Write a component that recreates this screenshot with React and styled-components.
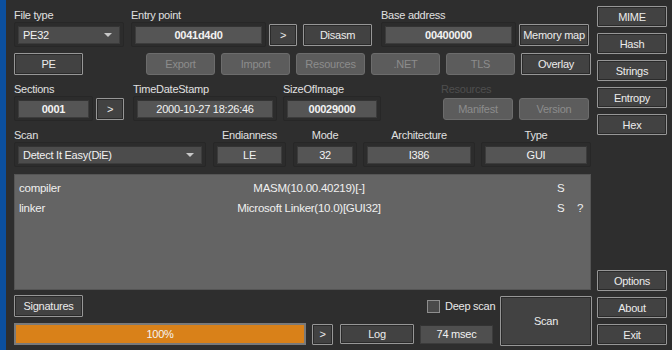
import React from 'react';
import styled, { createGlobalStyle } from 'styled-components';

const Global = createGlobalStyle`
  html, body {
    margin: 0;
    padding: 0;
    background: #2e2e2e;
  }
  body {
    font-family: 'Liberation Sans', Arial, sans-serif;
    font-size: 11px;
    letter-spacing: -0.25px;
    color: #e2e2e2;
  }
`;

const Window = styled.div`
  width: 672px;
  height: 350px;
  display: flex;
  background: #2e2e2e;
  overflow: hidden;
`;

const Stripe = styled.div`
  width: 6px;
  background: #0b4f9e;
`;

const Main = styled.div`
  width: 577px;
  padding: 8px 6px 0 8px;
  display: flex;
  flex-direction: column;
`;

const Side = styled.div`
  width: 70px;
  padding: 6px 0 5px;
  display: flex;
  flex-direction: column;
  gap: 6px;
`;

const Spacer = styled.div`
  flex: 1;
`;

const Row = styled.div`
  display: flex;
  align-items: flex-end;
  gap: ${(p) => p.$gap || 0}px;
  margin-top: ${(p) => p.$top || 0}px;
`;

const Field = styled.div`
  display: flex;
  flex-direction: column;
  margin-left: ${(p) => p.$ml || 0}px;
`;

const Label = styled.div`
  height: 14px;
  line-height: 14px;
  white-space: nowrap;
  color: ${(p) => (p.$dim ? '#4e4e4e' : '#e0e0e0')};
  text-align: ${(p) => (p.$center ? 'center' : 'left')};
`;

const Controls = styled.div`
  display: flex;
  align-items: center;
  height: 25px;
  gap: ${(p) => p.$gap || 3}px;
`;

const Frame = styled.div`
  box-sizing: border-box;
  width: ${(p) => p.$w}px;
  height: 25px;
  padding: 3px;
  border: 1px solid #272727;
  border-radius: 2px;
  background: #2c2c2c;
  display: flex;
  align-items: center;
`;

const Edit = styled.div`
  box-sizing: border-box;
  flex: 1;
  height: 18px;
  line-height: 16px;
  background: #555;
  border: 1px solid #3c3c3c;
  border-top-color: #333;
  color: #f2f2f2;
  font-weight: ${(p) => (p.$bold ? 700 : 400)};
  text-align: center;
  white-space: nowrap;
  overflow: hidden;
`;

const Combo = styled(Edit)`
  display: flex;
  align-items: center;
  justify-content: space-between;
  padding: 0 7px 0 4px;
  text-align: left;
  background: #4c4c4c;
`;

const Arrow = styled.span`
  width: 0;
  height: 0;
  border-left: 4px solid transparent;
  border-right: 4px solid transparent;
  border-top: 4px solid #c8c8c8;
`;

const Button = styled.div`
  box-sizing: border-box;
  width: ${(p) => p.$w || 69}px;
  height: ${(p) => p.$h || 22}px;
  flex-shrink: 0;
  display: flex;
  align-items: center;
  justify-content: center;
  white-space: nowrap;
  border: 1px solid ${(p) => (p.$off ? '#6c6c6c' : '#979797')};
  border-radius: ${(p) => (p.$off ? 3 : 1)}px;
  background: ${(p) => (p.$off ? '#5c5c5c' : '#424242')};
  box-shadow: ${(p) => (p.$off ? 'none' : 'inset 0 0 0 1px #2a2a2a')};
  color: ${(p) => (p.$off ? '#8c8c8c' : '#ececec')};
  margin-left: ${(p) => p.$ml || 0}px;
`;

const Results = styled.div`
  box-sizing: border-box;
  margin-top: 7px;
  height: 116px;
  background: #646464;
  border: 1px solid #555;
  padding: 3px 0 0 4px;
  display: grid;
  grid-template-columns: 140px 300px 98px 20px 1fr;
  grid-auto-rows: 20px;
  align-content: start;
  align-items: center;
  color: #f0f0f0;
  font-size: 11.5px;
`;

const Cell = styled.div`
  text-align: ${(p) => (p.$center ? 'center' : 'left')};
  white-space: nowrap;
`;

const Bottom = styled.div`
  margin-top: 5px;
  display: grid;
  grid-template-columns: 298px 27px 81px 80px 92px;
  grid-template-rows: 22px 6px 22px;
`;

const Progress = styled.div`
  box-sizing: border-box;
  grid-row: 3;
  grid-column: 1;
  width: 292px;
  height: 22px;
  border: 2px solid #7a7a7a;
  background: #d98119;
  color: #f4f4f4;
  display: flex;
  align-items: center;
  justify-content: center;
`;

const Cell3 = styled.div`
  grid-row: 3;
  display: flex;
  align-items: center;
`;

const Check = styled.label`
  grid-row: 1;
  grid-column: 4;
  display: flex;
  align-items: center;
  gap: 5px;
  padding-left: 7px;
  color: #e8e8e8;
  white-space: nowrap;
`;

const Box = styled.span`
  box-sizing: border-box;
  width: 13px;
  height: 13px;
  border: 1px solid #8e8e8e;
  background: #4a4a4a;
`;

const ScanButton = styled(Button)`
  grid-row: 1 / 4;
  grid-column: 5;
  margin-top: 1px;
  height: 50px;
  width: 92px;
`;

const Msec = styled(Edit)`
  flex: none;
  width: 73px;
  height: 19px;
  background: #4f4f4f;
  font-weight: 400;
`;

const sideTop = ['MIME', 'Hash', 'Strings', 'Entropy', 'Hex'];
const sideBottom = ['Options', 'About', 'Exit'];
const pages = ['Export', 'Import', 'Resources', '.NET', 'TLS'];

const results = [
  { type: 'compiler', name: 'MASM(10.00.40219)[-]', s: 'S', q: '' },
  { type: 'linker', name: 'Microsoft Linker(10.0)[GUI32]', s: 'S', q: '?' },
];

export default function App() {
  return (
    <Window>
      <Global />
      <Stripe />
      <Main>
        <Row $gap={7}>
          <Field>
            <Label>File type</Label>
            <Frame $w={110}>
              <Combo>
                PE32 <Arrow />
              </Combo>
            </Frame>
          </Field>
          <Field>
            <Label>Entry point</Label>
            <Controls>
              <Frame $w={135}>
                <Edit $bold>0041d4d0</Edit>
              </Frame>
              <Button $w={28}>&gt;</Button>
              <Button $ml={3}>Disasm</Button>
            </Controls>
          </Field>
          <Field $ml={2}>
            <Label>Base address</Label>
            <Controls>
              <Frame $w={135}>
                <Edit $bold>00400000</Edit>
              </Frame>
              <Button $w={70}>Memory map</Button>
            </Controls>
          </Field>
        </Row>

        <Row $top={6} $gap={6}>
          <Button>PE</Button>
          <Button $off $ml={57}>Export</Button>
          {pages.slice(1).map((p) => (
            <Button $off key={p}>
              {p}
            </Button>
          ))}
          <Button $w={70}>Overlay</Button>
        </Row>

        <Row $top={7}>
          <Field>
            <Label>Sections</Label>
            <Controls>
              <Frame $w={79}>
                <Edit $bold>0001</Edit>
              </Frame>
              <Button $w={28}>&gt;</Button>
            </Controls>
          </Field>
          <Field $ml={9}>
            <Label>TimeDateStamp</Label>
            <Frame $w={144}>
              <Edit>2000-10-27 18:26:46</Edit>
            </Frame>
          </Field>
          <Field $ml={6}>
            <Label>SizeOfImage</Label>
            <Frame $w={98}>
              <Edit $bold>00029000</Edit>
            </Frame>
          </Field>
          <Field $ml={60}>
            <Label $dim>Resources</Label>
            <Controls $gap={6}>
              <Button $off $w={70} $ml={2}>
                Manifest
              </Button>
              <Button $off $w={70}>
                Version
              </Button>
            </Controls>
          </Field>
        </Row>

        <Row $top={7}>
          <Field>
            <Label>Scan</Label>
            <Frame $w={192}>
              <Combo>
                Detect It Easy(DiE) <Arrow />
              </Combo>
            </Frame>
          </Field>
          <Field $ml={7}>
            <Label $center>Endianness</Label>
            <Frame $w={73}>
              <Edit>LE</Edit>
            </Frame>
          </Field>
          <Field $ml={7}>
            <Label $center>Mode</Label>
            <Frame $w={64}>
              <Edit>32</Edit>
            </Frame>
          </Field>
          <Field $ml={6}>
            <Label $center>Architecture</Label>
            <Frame $w={112}>
              <Edit>I386</Edit>
            </Frame>
          </Field>
          <Field $ml={6}>
            <Label $center>Type</Label>
            <Frame $w={110}>
              <Edit>GUI</Edit>
            </Frame>
          </Field>
        </Row>

        <Results>
          {results.map((r) => (
            <React.Fragment key={r.type}>
              <Cell>{r.type}</Cell>
              <Cell $center>{r.name}</Cell>
              <Cell />
              <Cell>{r.s}</Cell>
              <Cell>{r.q}</Cell>
            </React.Fragment>
          ))}
        </Results>

        <Bottom>
          <Button>Signatures</Button>
          <Check>
            <Box />
            Deep scan
          </Check>
          <Progress>100%</Progress>
          <Cell3>
            <Button $w={21} $h={21}>
              &gt;
            </Button>
          </Cell3>
          <Cell3>
            <Button $w={74} $h={20} $ml={1}>
              Log
            </Button>
          </Cell3>
          <Cell3>
            <Msec>74 msec</Msec>
          </Cell3>
          <ScanButton>Scan</ScanButton>
        </Bottom>
      </Main>
      <Side>
        {sideTop.map((b) => (
          <Button $w={70} $h={21} key={b}>
            {b}
          </Button>
        ))}
        <Spacer />
        {sideBottom.map((b) => (
          <Button $w={70} $h={21} key={b}>
            {b}
          </Button>
        ))}
      </Side>
    </Window>
  );
}
